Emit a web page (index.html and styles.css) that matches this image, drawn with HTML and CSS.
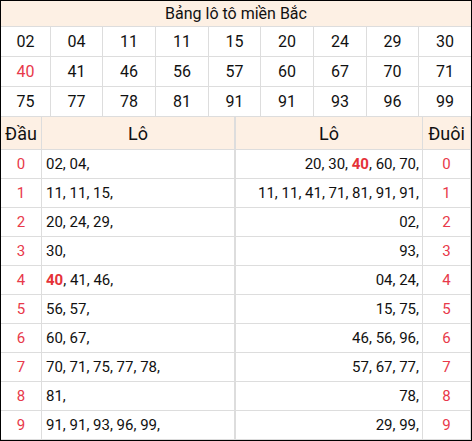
FILE: index.html
```html
<!DOCTYPE html>
<html lang="vi">
<head>
<meta charset="utf-8">
<title>Bảng lô tô miền Bắc</title>
<link rel="stylesheet" href="styles.css">
</head>
<body>
<div class="board">
  <div class="title">Bảng lô tô miền Bắc</div>
  <div class="loto-grid">
    <div class="cell">02</div><div class="cell">04</div><div class="cell">11</div><div class="cell">11</div><div class="cell">15</div><div class="cell">20</div><div class="cell">24</div><div class="cell">29</div><div class="cell">30</div>
    <div class="cell red">40</div><div class="cell">41</div><div class="cell">46</div><div class="cell">56</div><div class="cell">57</div><div class="cell">60</div><div class="cell">67</div><div class="cell">70</div><div class="cell">71</div>
    <div class="cell">75</div><div class="cell">77</div><div class="cell">78</div><div class="cell">81</div><div class="cell">91</div><div class="cell">91</div><div class="cell">93</div><div class="cell">96</div><div class="cell">99</div>
  </div>
  <div class="dd-grid">
    <div class="hd">Đầu</div><div class="hd">Lô</div><div class="hd">Lô</div><div class="hd">Đuôi</div>

    <div class="key">0</div><div class="lo-l"><span>02, 04,</span></div><div class="lo-r"><span>20, 30, <b class="hl">40</b>, 60, 70,</span></div><div class="key">0</div>
    <div class="key">1</div><div class="lo-l"><span>11, 11, 15,</span></div><div class="lo-r"><span>11, 11, 41, 71, 81, 91, 91,</span></div><div class="key">1</div>
    <div class="key">2</div><div class="lo-l"><span>20, 24, 29,</span></div><div class="lo-r"><span>02,</span></div><div class="key">2</div>
    <div class="key">3</div><div class="lo-l"><span>30,</span></div><div class="lo-r"><span>93,</span></div><div class="key">3</div>
    <div class="key">4</div><div class="lo-l"><span><b class="hl">40</b>, 41, 46,</span></div><div class="lo-r"><span>04, 24,</span></div><div class="key">4</div>
    <div class="key">5</div><div class="lo-l"><span>56, 57,</span></div><div class="lo-r"><span>15, 75,</span></div><div class="key">5</div>
    <div class="key">6</div><div class="lo-l"><span>60, 67,</span></div><div class="lo-r"><span>46, 56, 96,</span></div><div class="key">6</div>
    <div class="key">7</div><div class="lo-l"><span>70, 71, 75, 77, 78,</span></div><div class="lo-r"><span>57, 67, 77,</span></div><div class="key">7</div>
    <div class="key">8</div><div class="lo-l"><span>81,</span></div><div class="lo-r"><span>78,</span></div><div class="key">8</div>
    <div class="key">9</div><div class="lo-l"><span>91, 91, 93, 96, 99,</span></div><div class="lo-r"><span>29, 99,</span></div><div class="key">9</div>
  </div>
</div>
</body>
</html>
```

FILE: styles.css
```css
* { box-sizing: border-box; }

html, body {
  margin: 0;
  padding: 0;
  background: #ffffff;
}

body {
  font-family: Roboto, "Liberation Sans", sans-serif;
  color: #111111;
}

.board {
  width: 472px;
  height: 441px;
  border: 1px solid #000000;
  background: #dddddd;
  overflow: hidden;
}

.title {
  height: 25px;
  background: #fdf0e4;
  font-size: 16px;
  line-height: 25px;
  text-align: center;
  margin-bottom: 1px;
}

.loto-grid {
  display: grid;
  grid-template-columns: 49px 51px 52px 52px 51px 52px 52px 51px 52px;
  grid-auto-rows: 29px;
  gap: 1px;
  margin-bottom: 1px;
}

.cell {
  background: #ffffff;
  font-size: 16px;
  display: flex;
  align-items: center;
  justify-content: center;
}

.red { color: #e8394a; }

.dd-grid {
  display: grid;
  grid-template-columns: 40px 192px 187px 47px;
  grid-template-rows: 32px;
  grid-auto-rows: 28px;
  column-gap: 1px;
  row-gap: 1px;
}

.dd-grid > div:nth-child(4n+3) { margin-left: 1px; }

.hd {
  background: #fdf0e4;
  font-size: 18px;
  display: flex;
  align-items: center;
  justify-content: center;
}

.key {
  background: #ffffff;
  color: #e8394a;
  font-size: 15px;
  display: flex;
  align-items: center;
  justify-content: center;
}

.lo-l, .lo-r {
  background: #ffffff;
  font-size: 15px;
  display: flex;
  align-items: center;
  white-space: nowrap;
}

.lo-l { padding-left: 4px; }
.lo-r { justify-content: flex-end; padding-right: 3px; }

.hl {
  color: #e53238;
  font-weight: 700;
}
```
